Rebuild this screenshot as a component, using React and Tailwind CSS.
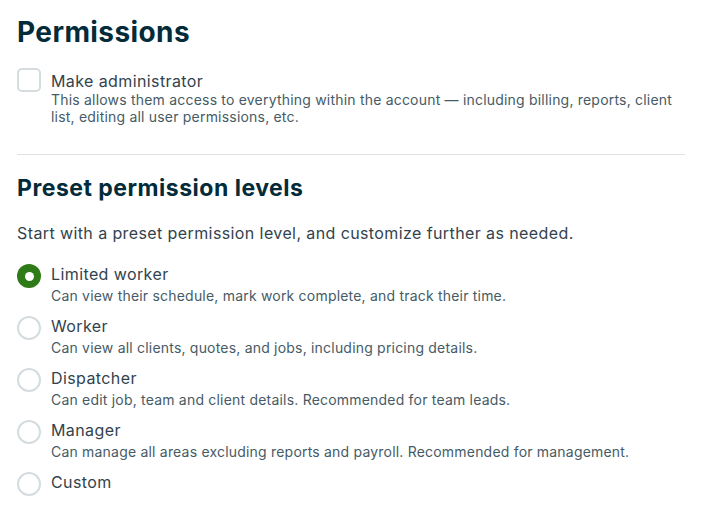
import React from "react";

const options = [
  { label: "Limited worker", desc: "Can view their schedule, mark work complete, and track their time.", checked: true },
  { label: "Worker", desc: "Can view all clients, quotes, and jobs, including pricing details." },
  { label: "Dispatcher", desc: "Can edit job, team and client details. Recommended for team leads." },
  { label: "Manager", desc: "Can manage all areas excluding reports and payroll. Recommended for management." },
  { label: "Custom" },
];

function Radio({ checked }) {
  return checked ? (
    <span className="flex h-6 w-6 shrink-0 items-center justify-center rounded-full bg-[#2e7b18]">
      <span className="h-[9px] w-[9px] rounded-full bg-white" />
    </span>
  ) : (
    <span className="h-6 w-6 shrink-0 rounded-full border-2 border-[#d4dcdf] bg-white" />
  );
}

export default function App() {
  return (
    <div
      className="min-h-[516px] bg-white pl-[17px] pr-[18px] pt-[14px] text-[#32434d]"
      style={{ fontFamily: "Inter, 'Noto Sans', sans-serif" }}
    >
      <h1 className="text-[28px] font-bold leading-[36px] tracking-[0.4px] text-[#032b3a]">Permissions</h1>

      <div className="mt-[18px] flex items-start gap-[10px]">
        <span className="h-6 w-6 shrink-0 rounded-[5px] border-2 border-[#d4dcdf] bg-white" />
        <div className="flex flex-col pt-[3px]">
          <span className="text-base leading-5 tracking-[0.4px] text-[#32434d]">Make administrator</span>
          <span className="text-sm leading-[17px] tracking-[0.2px] text-[#465b66]">
            This allows them access to everything within the account — including billing, reports, client list, editing all user permissions, etc.
          </span>
        </div>
      </div>

      <div className="mt-[29px] h-px w-full bg-[#dde3e5]" />

      <h2 className="mt-[18px] text-[23px] font-bold leading-[30px] tracking-[0.5px] text-[#032b3a]">Preset permission levels</h2>

      <p className="mt-[18px] text-base leading-6 tracking-[0.4px] text-[#32434d]">
        Start with a preset permission level, and customize further as needed.
      </p>

      <div className="mt-[19px] flex flex-col gap-[11px]">
        {options.map((o) => (
          <div key={o.label} className="flex items-start gap-[10px]">
            <Radio checked={o.checked} />
            <div className="flex flex-col">
              <span className="text-base leading-5 tracking-[0.4px] text-[#32434d]">{o.label}</span>
              {o.desc && (
                <span className="mt-[3px] text-sm leading-[18px] tracking-[0.2px] text-[#465b66]">{o.desc}</span>
              )}
            </div>
          </div>
        ))}
      </div>
    </div>
  );
}
